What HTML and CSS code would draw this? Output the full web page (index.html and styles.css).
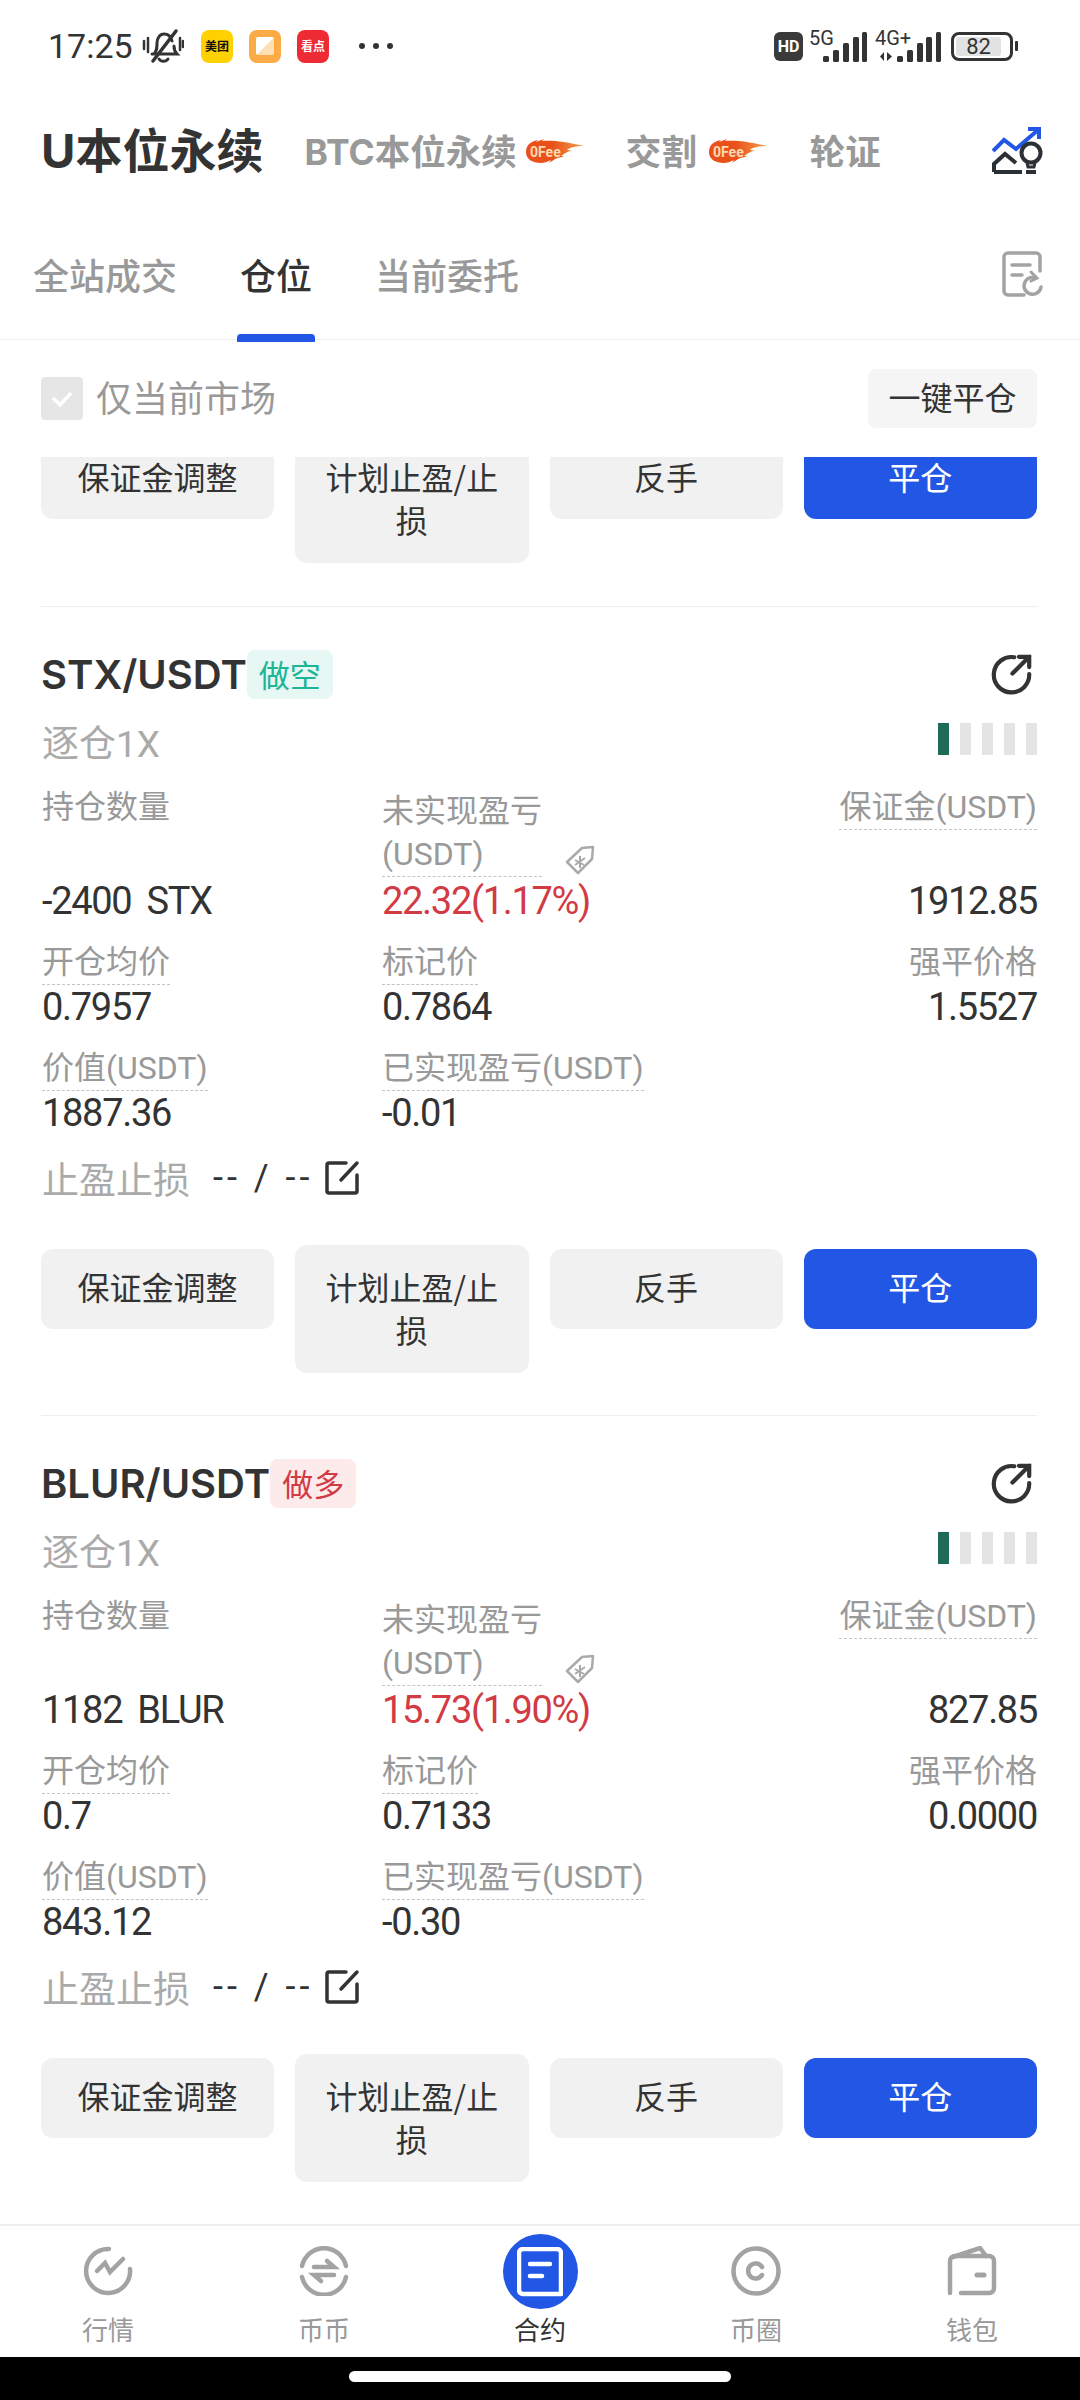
FILE: index.html
```html
<!DOCTYPE html>
<html>
<head lang="en">
    <meta charset="UTF-8">
    <title>U本位永续</title>
    <link rel="stylesheet" href="styles.css">
</head>
<body>
<div id="page">
    <div class="status">
        <span class="time">17:25</span>
        <svg class="bell" viewBox="0 0 42 36" fill="none" stroke="#333" stroke-width="3" stroke-linecap="round">
            <path d="M12 26c3-3 3-6 3-11 0-5 3-9 7-9s7 3 8 7M32 18c0 3 1 6 3 8H10M17 31c2 3 7 3 9 0M9 3" />
            <path d="M11 33L34 3" stroke-width="3.5"/>
            <path d="M2 13v8M6 10v14M38 10v12M41 13v6" stroke-width="2.5"/>
        </svg>
        <span class="app app-mt"><span>美团</span></span>
        <span class="app app-note"><i></i></span>
        <span class="app app-kd"><span>看点</span></span>
        <span class="dots"><i></i><i></i><i></i></span>
        <span class="status-right">
            <span class="hd">HD</span>
            <span class="net"><span>5G</span>
                <svg class="bars" width="44" height="30" viewBox="0 0 44 30" fill="#333"><rect x="0" y="24" width="6" height="6" rx="1.5"/><rect x="10" y="18" width="6" height="12" rx="1.5"/><rect x="20" y="11" width="6" height="19" rx="1.5"/><rect x="30" y="5" width="6" height="25" rx="1.5"/><rect x="39" y="0" width="5" height="30" rx="1.5"/></svg>
            </span>
            <span class="net net2"><span>4G+</span>
                <svg class="bars" width="62" height="30" viewBox="0 0 62 30" fill="#333"><path d="M5 20v9l-4-4.500zM8 20v9l5-4.500z"/><rect x="18" y="24" width="6" height="6" rx="1.500"/><rect x="28" y="18" width="6" height="12" rx="1.500"/><rect x="38" y="11" width="6" height="19" rx="1.500"/><rect x="47" y="5" width="6" height="25" rx="1.500"/><rect x="57" y="0" width="5" height="30" rx="1.500"/></svg>
            </span>
            <span class="battery"><span>82</span></span><i class="nub"></i>
        </span>
    </div>

    <div class="market-tabs">
        <span class="market-on">U本位永续</span>
        <span class="market">BTC本位永续</span>
        <svg class="fee" viewBox="0 0 58 28"><defs><linearGradient id="flame" x1="0" x2="1" y1="0" y2="0"><stop offset="0.45" stop-color="#e9501a"/><stop offset="1" stop-color="#f7a04b"/></linearGradient></defs><path d="M0 14C0 6 6 3 12 2l-2 2 8-3-2 2c9-1 22 0 42 5-9 0-15 2-17 4 1 0 3 0 5 1-4 0-7 2-11 5 1 0 2 0 3 1-6 0-9 2-15 6l2-3c-4 2-7 3-10 3C6 25 0 21 0 14z" fill="url(#flame)"/><text x="4" y="19" font-size="14" font-weight="700" fill="#ffd9b0" font-family="Roboto, sans-serif">0Fee</text></svg>
        <span class="market market-next">交割</span>
        <svg class="fee fee-next" viewBox="0 0 58 28"><path d="M0 14C0 6 6 3 12 2l-2 2 8-3-2 2c9-1 22 0 42 5-9 0-15 2-17 4 1 0 3 0 5 1-4 0-7 2-11 5 1 0 2 0 3 1-6 0-9 2-15 6l2-3c-4 2-7 3-10 3C6 25 0 21 0 14z" fill="url(#flame)"/><text x="4" y="19" font-size="14" font-weight="700" fill="#ffd9b0" font-family="Roboto, sans-serif">0Fee</text></svg>
        <span class="market market-last">轮证</span>
        <svg class="bulb" viewBox="0 0 52 48" fill="none" stroke-width="4">
            <path d="M1 25L12 14l12 9L46 4" stroke="#2157e4"/>
            <path d="M36 3h11v10" stroke="#2157e4"/>
            <path d="M2 46v-8l11-10 11 9M2 46h28M34 46h10" stroke="#2b2f36"/>
            <circle cx="39" cy="27" r="9.500" stroke="#2b2f36"/>
            <path d="M35 37l1 4h6l1-4" stroke="#2b2f36" stroke-width="3"/>
        </svg>
    </div>

    <div class="sub-tabs">
        <span class="sub">全站成交</span>
        <span class="sub sub-on">仓位</span>
        <span class="sub">当前委托</span>
        <svg class="doc" viewBox="0 0 42 46" fill="none" stroke="#a3a3a3" stroke-width="3.500" stroke-linecap="round">
            <path d="M22 44H6a4 4 0 0 1-4-4V6a4 4 0 0 1 4-4h28a4 4 0 0 1 4 4v14"/>
            <path d="M10 14h18M10 24h10"/>
            <path d="M39 36a8.500 8.500 0 1 1-5-9"/>
            <path d="M29 21l6 6-6 3" stroke-width="3"/>
        </svg>
    </div>

    <div class="filter">
        <span class="check"><svg width="24" height="20" viewBox="0 0 24 20" fill="none" stroke="#fff" stroke-width="3.500"><path d="M3 9l7 7L21 4"/></svg></span>
        <span class="filter-text">仅当前市场</span>
        <span class="close-all">一键平仓</span>
    </div>

    <div class="list">
        <div class="actions actions-cut">
            <div class="btn">保证金调整</div>
            <div class="btn btn-tall">计划止盈/止<br>损</div>
            <div class="btn">反手</div>
            <div class="btn btn-primary">平仓</div>
        </div>

        <div class="card">
            <div class="card-head">
                <span class="pair">STX/USDT</span><span class="side side-short">做空</span>
                <svg class="share" viewBox="0 0 44 44" fill="none" stroke="#333" stroke-width="4.500" stroke-linecap="round"><path d="M25 3.500a19 19 0 1 0 16 18"/><path d="M23 21L41 3M30 3h11v11"/></svg>
            </div>
            <div class="card-sub">
                <span class="mode">逐仓1X</span>
                <span class="risk"><i class="risk-on"></i><i></i><i></i><i></i><i></i></span>
            </div>
            <div class="grid">
                <div class="cell"><span class="label label-plain">持仓数量</span><span class="value">-2400 STX</span></div>
                <div class="cell cell-mid"><span class="label">未实现盈亏<br>(USDT)</span>
                    <svg class="tag" viewBox="0 0 30 30" fill="none" stroke="#aaa" stroke-width="2.500" stroke-linejoin="round"><path d="M2 17L17 3l11-1-1 12-14 14z"/><path d="M10 15l9 5M15 11v12M20 13l-10 7" stroke-width="2"/></svg>
                    <span class="value value-red">22.32(1.17%)</span></div>
                <div class="cell cell-right"><span class="label">保证金(USDT)</span><span class="value">1912.85</span></div>
                <div class="cell"><span class="label">开仓均价</span><span class="value">0.7957</span></div>
                <div class="cell"><span class="label">标记价</span><span class="value">0.7864</span></div>
                <div class="cell cell-right"><span class="label label-plain">强平价格</span><span class="value">1.5527</span></div>
                <div class="cell"><span class="label">价值(USDT)</span><span class="value">1887.36</span></div>
                <div class="cell"><span class="label">已实现盈亏(USDT)</span><span class="value">-0.01</span></div>
            </div>
            <div class="stop">
                <span class="stop-label">止盈止损</span><span class="stop-value">-- / --</span>
                <svg class="edit" viewBox="0 0 36 36" fill="none" stroke="#333" stroke-width="3.500" stroke-linecap="round"><path d="M22 3H5a2 2 0 0 0-2 2v26a2 2 0 0 0 2 2h26a2 2 0 0 0 2-2V15"/><path d="M17 20L33 3"/></svg>
            </div>
            <div class="actions">
                <div class="btn">保证金调整</div>
                <div class="btn btn-tall">计划止盈/止<br>损</div>
                <div class="btn">反手</div>
                <div class="btn btn-primary">平仓</div>
            </div>
        </div>

        <div class="card">
            <div class="card-head">
                <span class="pair">BLUR/USDT</span><span class="side side-long">做多</span>
                <svg class="share" viewBox="0 0 44 44" fill="none" stroke="#333" stroke-width="4.500" stroke-linecap="round"><path d="M25 3.500a19 19 0 1 0 16 18"/><path d="M23 21L41 3M30 3h11v11"/></svg>
            </div>
            <div class="card-sub">
                <span class="mode">逐仓1X</span>
                <span class="risk"><i class="risk-on"></i><i></i><i></i><i></i><i></i></span>
            </div>
            <div class="grid">
                <div class="cell"><span class="label label-plain">持仓数量</span><span class="value">1182 BLUR</span></div>
                <div class="cell cell-mid"><span class="label">未实现盈亏<br>(USDT)</span>
                    <svg class="tag" viewBox="0 0 30 30" fill="none" stroke="#aaa" stroke-width="2.500" stroke-linejoin="round"><path d="M2 17L17 3l11-1-1 12-14 14z"/><path d="M10 15l9 5M15 11v12M20 13l-10 7" stroke-width="2"/></svg>
                    <span class="value value-red">15.73(1.90%)</span></div>
                <div class="cell cell-right"><span class="label">保证金(USDT)</span><span class="value">827.85</span></div>
                <div class="cell"><span class="label">开仓均价</span><span class="value">0.7</span></div>
                <div class="cell"><span class="label">标记价</span><span class="value">0.7133</span></div>
                <div class="cell cell-right"><span class="label label-plain">强平价格</span><span class="value">0.0000</span></div>
                <div class="cell"><span class="label">价值(USDT)</span><span class="value">843.12</span></div>
                <div class="cell"><span class="label">已实现盈亏(USDT)</span><span class="value">-0.30</span></div>
            </div>
            <div class="stop">
                <span class="stop-label">止盈止损</span><span class="stop-value">-- / --</span>
                <svg class="edit" viewBox="0 0 36 36" fill="none" stroke="#333" stroke-width="3.500" stroke-linecap="round"><path d="M22 3H5a2 2 0 0 0-2 2v26a2 2 0 0 0 2 2h26a2 2 0 0 0 2-2V15"/><path d="M17 20L33 3"/></svg>
            </div>
            <div class="actions">
                <div class="btn">保证金调整</div>
                <div class="btn btn-tall">计划止盈/止<br>损</div>
                <div class="btn">反手</div>
                <div class="btn btn-primary">平仓</div>
            </div>
        </div>
    </div>

    <div class="tabbar">
        <div class="tab">
            <svg class="tab-icon" viewBox="0 0 50 50" fill="none" stroke="#a3a3a3" stroke-width="4.500" stroke-linecap="round"><path d="M26 3a22 22 0 1 0 21 20"/><path d="M14 25l8-8 5 9 13-13"/></svg>
            <span>行情</span>
        </div>
        <div class="tab">
            <svg class="tab-icon" viewBox="0 0 50 50" fill="none" stroke="#a3a3a3" stroke-width="4.500" stroke-linecap="round"><path d="M3 20a22.500 22.500 0 0 1 44 0M47 31a22.500 22.500 0 0 1-44 0"/><path d="M15 21h20l-7-6M35 29H15l7 6"/></svg>
            <span>币币</span>
        </div>
        <div class="tab tab-on">
            <span class="tab-circle"><svg width="46" height="50" viewBox="0 0 46 50" fill="none" stroke="#fff" stroke-width="4.500" stroke-linecap="round"><path d="M44 47H6a4 4 0 0 1-4-4V6a4 4 0 0 1 4-4h34a4 4 0 0 1 4 4v41"/><path d="M13 17h20M13 29h12"/></svg></span>
            <span>合约</span>
        </div>
        <div class="tab">
            <svg class="tab-icon" viewBox="0 0 50 50" fill="none" stroke="#a3a3a3" stroke-width="4.500" stroke-linecap="round"><circle cx="25" cy="25" r="22.500"/><path d="M31 21a7.500 7.500 0 1 0 0 8"/></svg>
            <span>币圈</span>
        </div>
        <div class="tab">
            <svg class="tab-icon" viewBox="0 0 50 50" fill="none" stroke="#a3a3a3" stroke-width="4.500" stroke-linecap="round"><path d="M3 47V15a5 5 0 0 1 5-5h34a5 5 0 0 1 5 5v27a5 5 0 0 1-5 5H14"/><path d="M6 11L33 2l6 8"/><path d="M30 29h7" stroke-width="5"/></svg>
            <span>钱包</span>
        </div>
    </div>

    <div class="homebar"><i></i></div>
</div>
</body>
</html>
```

FILE: styles.css
```css
*{
    margin: 0;
    padding: 0;
    box-sizing: border-box;
}
body{
    background: #fff;
    font-family: "Noto Sans CJK SC", sans-serif;
    color: #333;
}
i{
    display: block;
}
#page{
    width: 1080px;
    height: 2400px;
    display: flex;
    flex-direction: column;
    overflow: hidden;
}

/* status bar */
.status{
    height: 92px;
    padding: 0 62px 0 48px;
    display: flex;
    align-items: center;
    color: #333;
}
.time{
    font: 400 34px Roboto, sans-serif;
    width: 94px;
}
.bell{
    width: 42px;
    height: 36px;
}
.app{
    width: 32px;
    height: 33px;
    border-radius: 8px;
    margin-left: 16px;
    display: flex;
    align-items: center;
    justify-content: center;
    font-size: 12px;
    line-height: 1;
    font-weight: 700;
    overflow: hidden;
}
.app-mt{
    background: #ffd100;
    color: #111;
    margin-left: 17px;
}
.app-note{
    background: #fbab45;
}
.app-note i{
    width: 18px;
    height: 18px;
    border-radius: 2px;
    background: linear-gradient(135deg, #fff 50%, #ffe0b5 50%);
}
.app-kd{
    background: #ee2b35;
    color: #fff;
}
.dots{
    display: flex;
    gap: 8px;
    margin-left: 30px;
}
.dots i{
    width: 6px;
    height: 6px;
    border-radius: 50%;
    background: #333;
}
.status-right{
    margin-left: auto;
    display: flex;
    align-items: center;
}
.hd{
    width: 29px;
    height: 29px;
    border-radius: 6px;
    background: #3a3a3a;
    color: #fff;
    font: 700 16px/29px Roboto, sans-serif;
    text-align: center;
}
.net{
    display: flex;
    align-items: flex-end;
    margin-left: 6px;
    height: 32px;
    position: relative;
    padding-left: 14px;
}
.net span{
    position: absolute;
    left: 0;
    top: -4px;
    font: 400 20px Roboto, sans-serif;
}
.net2{
    margin-left: 8px;
    padding-left: 4px;
}
.battery{
    width: 62px;
    height: 29px;
    margin-left: 10px;
    border: 3px solid #333;
    border-radius: 8px;
    padding: 2px;
    display: flex;
}
.battery span{
    width: 45px;
    background: #e2e2e2;
    border-radius: 3px;
    font: 400 22px/19px Roboto, sans-serif;
    text-align: center;
    white-space: nowrap;
}
.nub{
    width: 3px;
    height: 10px;
    margin-left: 2px;
    background: #333;
    border-radius: 1px;
}

/* market tabs */
.market-tabs{
    height: 116px;
    padding: 0 36px 0 41px;
    display: flex;
    align-items: center;
}
.market-on{
    font: 700 47px "Inter", "Noto Sans CJK SC", sans-serif;
    color: #333;
    padding-bottom: 6px;
}
.market{
    font: 700 35.500px "Inter", "Noto Sans CJK SC", sans-serif;
    color: #999;
    margin-left: 41px;
    padding-bottom: 2px;
}
.market-next{
    margin-left: 42px;
}
.market-last{
    margin-left: 43px;
}
.fee{
    width: 58px;
    height: 28px;
    margin: 3px 0 0 9px;
}
.fee-next{
    margin-left: 12px;
}
.bulb{
    width: 52px;
    height: 48px;
    margin-left: auto;
}

/* sub tabs */
.sub-tabs{
    height: 132px;
    padding: 0 36px 0 33px;
    display: flex;
    align-items: center;
    border-bottom: 1px solid #eee;
}
.sub{
    font-size: 36px;
    font-weight: 500;
    color: #999;
    margin-right: 63px;
    line-height: 1;
    position: relative;
}
.sub-on{
    color: #333;
}
.sub-on::after{
    content: "";
    position: absolute;
    left: -3px;
    right: -3px;
    bottom: -50px;
    height: 8px;
    border-radius: 4px 4px 0 0;
    background: #2157e4;
}
.doc{
    width: 42px;
    height: 46px;
    margin-left: auto;
}

/* filter row */
.filter{
    height: 117px;
    padding: 0 43px 0 41px;
    display: flex;
    align-items: center;
}
.check{
    width: 42px;
    height: 43px;
    border-radius: 4px;
    background: #e6e6e6;
    display: flex;
    align-items: center;
    justify-content: center;
}
.filter-text{
    margin-left: 13px;
    font-size: 36px;
    color: #999;
    padding-bottom: 5px;
}
.close-all{
    margin-left: auto;
    width: 169px;
    height: 59px;
    border-radius: 8px;
    background: #f5f5f5;
    font-size: 32px;
    line-height: 55px;
    text-align: center;
}

/* positions */
.list{
    flex: 1;
    overflow: hidden;
    padding: 0 43px 0 41px;
}
.actions{
    display: flex;
    align-items: flex-start;
    gap: 21px;
    padding-bottom: 42px;
}
.actions-cut{
    margin-top: -22px;
    padding-bottom: 43px;
}
.btn{
    flex: 1;
    height: 80px;
    margin-top: 4px;
    padding-top: 16px;
    border-radius: 12px;
    background: #f1f1f1;
    color: #333;
    font-size: 32px;
    line-height: 43px;
    text-align: center;
}
.btn-tall{
    height: 128px;
    margin-top: 0;
    padding-top: 20px;
}
.btn-primary{
    background: #2157e4;
    color: #fff;
}
.card{
    border-top: 1px solid #eee;
    padding-top: 43px;
}
.card-head{
    display: flex;
    align-items: center;
    height: 49px;
}
.pair{
    font: 600 40px "Inter", sans-serif;
    color: #333;
}
.side{
    height: 49px;
    padding: 0 12px;
    border-radius: 8px;
    font-size: 31px;
    line-height: 47px;
}
.side-short{
    background: #e6f7f4;
    color: #1cb596;
}
.side-long{
    background: #fdeaea;
    color: #d23a44;
}
.share{
    width: 41px;
    height: 41px;
    margin-left: auto;
    margin-right: 5px;
}
.card-sub{
    display: flex;
    justify-content: space-between;
    align-items: flex-start;
    margin-top: 24px;
    height: 44px;
    padding-left: 1px;
}
.mode{
    font: 400 37px/44px Roboto, "Noto Sans CJK SC", sans-serif;
    color: #aaa;
}
.risk{
    display: flex;
    gap: 11px;
    height: 32px;
}
.risk i{
    width: 11px;
    background: #e4e4e4;
}
.risk i.risk-on{
    background: #1f6b5a;
}
.grid{
    display: grid;
    grid-template-columns: 340px 1fr auto;
    row-gap: 18px;
    margin-top: 19px;
    padding-left: 1px;
}
.cell{
    display: flex;
    flex-direction: column;
    justify-content: space-between;
    align-items: flex-start;
    position: relative;
}
.cell-mid{
    padding-top: 4px;
}
.cell-right{
    align-items: flex-end;
    text-align: right;
}
.label{
    font: 400 32px/43px Roboto, "Noto Sans CJK SC", sans-serif;
    color: #999;
    border-bottom: 1px dashed #c4c4c4;
}
.label-plain{
    border-bottom-color: transparent;
}
.value{
    font: 400 38px/44px Roboto, sans-serif;
    letter-spacing: -1.300px;
    word-spacing: 7px;
    color: #333;
}
.cell:nth-child(-n+3) .value{
    margin-top: 2px;
}
.value-red{
    color: #d23a44;
}
.tag{
    position: absolute;
    left: 183px;
    top: 59px;
    width: 30px;
    height: 30px;
}
.stop{
    display: flex;
    align-items: center;
    height: 44px;
    margin-top: 21px;
    padding-left: 1px;
}
.stop-label{
    font-size: 37px;
    color: #aaa;
}
.stop-value{
    margin-left: 23px;
    font: 400 36px Roboto, sans-serif;
    letter-spacing: 4px;
    color: #333;
    white-space: pre;
}
.edit{
    width: 36px;
    height: 36px;
    margin-left: 10px;
}
.card .actions{
    margin-top: 45px;
}

/* bottom tabs */
.tabbar{
    height: 133px;
    border-top: 2px solid #eee;
    display: grid;
    grid-template-columns: repeat(5, 1fr);
}
.tab{
    display: flex;
    flex-direction: column;
    align-items: center;
    padding-top: 20px;
    font-size: 26px;
    line-height: 40px;
    color: #999;
    position: relative;
}
.tab span:last-child{
    margin-top: 13px;
}
.tab-icon{
    width: 50px;
    height: 50px;
}
.tab-on{
    color: #333;
}
.tab-circle{
    width: 75px;
    height: 75px;
    margin-top: -12px;
    margin-bottom: -13px;
    border-radius: 50%;
    background: #2157e4;
    display: flex;
    align-items: center;
    justify-content: center;
}
.homebar{
    height: 43px;
    background: #000;
    display: flex;
    justify-content: center;
    padding-top: 14px;
}
.homebar i{
    width: 382px;
    height: 11px;
    border-radius: 6px;
    background: #fff;
}
```
